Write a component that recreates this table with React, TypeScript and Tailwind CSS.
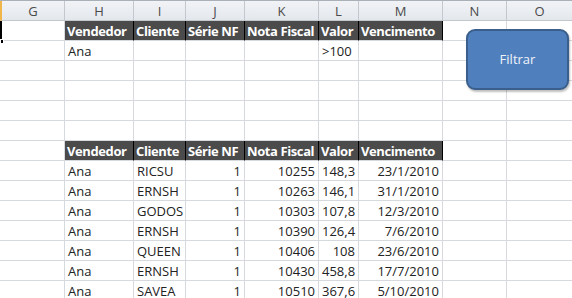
import React from 'react';

type Row = {
  vendedor: string;
  cliente: string;
  serie: number;
  nota: number;
  valor: string;
  vencimento: string;
};

const cols = ['G', 'H', 'I', 'J', 'K', 'L', 'M', 'N', 'O'];
const headers = ['Vendedor', 'Cliente', 'Série NF', 'Nota Fiscal', 'Valor', 'Vencimento'];

const rows: Row[] = [
  { vendedor: 'Ana', cliente: 'RICSU', serie: 1, nota: 10255, valor: '148,3', vencimento: '23/1/2010' },
  { vendedor: 'Ana', cliente: 'ERNSH', serie: 1, nota: 10263, valor: '146,1', vencimento: '31/1/2010' },
  { vendedor: 'Ana', cliente: 'GODOS', serie: 1, nota: 10303, valor: '107,8', vencimento: '12/3/2010' },
  { vendedor: 'Ana', cliente: 'ERNSH', serie: 1, nota: 10390, valor: '126,4', vencimento: '7/6/2010' },
  { vendedor: 'Ana', cliente: 'QUEEN', serie: 1, nota: 10406, valor: '108', vencimento: '23/6/2010' },
  { vendedor: 'Ana', cliente: 'ERNSH', serie: 1, nota: 10430, valor: '458,8', vencimento: '17/7/2010' },
  { vendedor: 'Ana', cliente: 'SAVEA', serie: 1, nota: 10510, valor: '367,6', vencimento: '5/10/2010' },
];

const gridCols = 'grid grid-cols-[65px_69px_52px_59px_74px_40px_84px_64px_66px]';

function Cell({ children, right }: { children?: React.ReactNode; right?: boolean }) {
  return (
    <div
      className={`h-5 border-r border-b border-[#d6d9dd] px-[3px] leading-5 whitespace-nowrap overflow-hidden ${
        right ? 'text-right' : 'text-left'
      }`}
    >
      {children}
    </div>
  );
}

function HeaderRow() {
  return (
    <div className={gridCols}>
      <Cell />
      {headers.map((h) => (
        <div
          key={h}
          className="h-5 border-r border-b border-r-black border-b-[#d6d9dd] bg-[#4b4b4b] px-[2px] pt-px leading-[19px] font-bold tracking-[-0.4px] text-white whitespace-nowrap overflow-hidden"
        >
          {h}
        </div>
      ))}
      <Cell />
      <Cell />
    </div>
  );
}

function EmptyRow() {
  return (
    <div className={gridCols}>
      {cols.map((c) => (
        <Cell key={c} />
      ))}
    </div>
  );
}

function App() {
  return (
    <div className="relative w-[572px] h-[298px] overflow-hidden bg-white font-['Open_Sans',sans-serif] text-[13px] text-[#222]">
      {/* column letters */}
      <div className={`${gridCols} border-t border-[#a9b0b8] bg-gradient-to-b from-[#f1f3f6] to-[#e3e7ec]`}>
        {cols.map((c, i) => (
          <div
            key={c}
            className={`h-5 border-r border-b border-[#c3c8ce] text-center leading-5 text-[#4a4a4a] ${
              i === 0 ? 'border-l-2 border-l-[#f0b64a]' : ''
            }`}
          >
            {c}
          </div>
        ))}
      </div>

      <HeaderRow />
      <div className={gridCols}>
        <Cell />
        <Cell>Ana</Cell>
        <Cell />
        <Cell />
        <Cell />
        <Cell>&gt;100</Cell>
        <Cell />
        <Cell />
        <Cell />
      </div>
      <EmptyRow />
      <EmptyRow />
      <EmptyRow />
      <EmptyRow />

      <HeaderRow />
      {rows.map((r) => (
        <div key={r.nota} className={gridCols}>
          <Cell />
          <Cell>{r.vendedor}</Cell>
          <Cell>{r.cliente}</Cell>
          <Cell right>{r.serie}</Cell>
          <Cell right>{r.nota}</Cell>
          <Cell right>{r.valor}</Cell>
          <Cell right>{r.vencimento}</Cell>
          <Cell />
          <Cell />
        </div>
      ))}

      {/* active cell marker at the left edge */}
      <div className="absolute left-0 top-[21px] h-[21px] w-[2px] bg-black" />
      <div className="absolute left-0 top-[39px] h-[5px] w-[4px] bg-black border border-white" />

      {/* Filtrar shape */}
      <button className="absolute left-[466px] top-[29px] flex h-[61px] w-[103px] items-center justify-center rounded-[9px] border-2 border-[#3a5f8c] bg-[#4f7fbd] text-[13px] text-[#eef3fa] shadow-[1px_2px_2px_rgba(0,0,0,0.25)]">
        Filtrar
      </button>
    </div>
  );
}

export default App;
